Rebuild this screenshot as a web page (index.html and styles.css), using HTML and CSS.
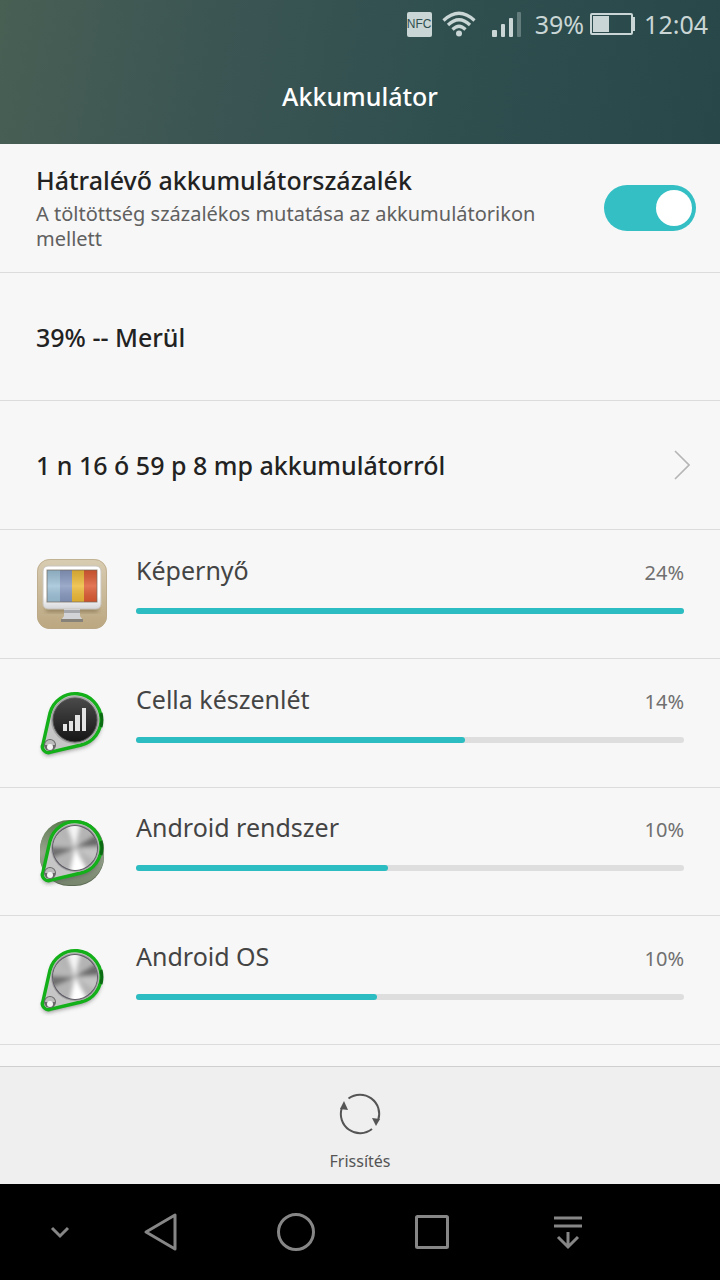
FILE: index.html
```
<!DOCTYPE html>
<html lang="hu">
<head>
	<meta charset="UTF-8">
	<meta name="viewport" content="width=device-width, initial-scale=1">
	<title>Akkumulátor</title>
	<link rel="stylesheet" href="styles.css">
</head>
<body>
	<!-- shared gradients and the knob drawing -->
	<svg class="defs" width="0" height="0" aria-hidden="true">
		<defs>
			<linearGradient id="tan" x1="0" y1="0" x2="0" y2="1">
				<stop offset="0" stop-color="#d8ccb2"/>
				<stop offset="1" stop-color="#bba780"/>
			</linearGradient>
			<linearGradient id="frame" x1="0" y1="0" x2="0" y2="1">
				<stop offset="0.7" stop-color="#fff"/>
				<stop offset="1" stop-color="#d4d5d8"/>
			</linearGradient>
			<linearGradient id="shine" x1="0" y1="0" x2="0" y2="1">
				<stop offset="0" stop-color="#333" stop-opacity="0.15"/>
				<stop offset="0.5" stop-color="#fff" stop-opacity="0.2"/>
				<stop offset="1" stop-color="#333" stop-opacity="0.1"/>
			</linearGradient>
			<linearGradient id="dark" x1="0" y1="0" x2="0" y2="1">
				<stop offset="0" stop-color="#4a4a4a"/>
				<stop offset="1" stop-color="#151515"/>
			</linearGradient>
			<linearGradient id="olive" x1="0" y1="0" x2="0" y2="1">
				<stop offset="0" stop-color="#5d7a50"/>
				<stop offset="0.5" stop-color="#98a48f"/>
				<stop offset="1" stop-color="#77866d"/>
			</linearGradient>
			<filter id="shadow" x="-30%" y="-30%" width="160%" height="160%">
				<feGaussianBlur stdDeviation="2"/>
			</filter>
			<filter id="soft" x="-20%" y="-20%" width="140%" height="140%">
				<feGaussianBlur stdDeviation="2"/>
			</filter>
			<clipPath id="disc"><circle cx="39" cy="33" r="22"/></clipPath>
			<g id="base">
				<path d="M14 26A26 26 0 1 1 45 58L15 65A6 6 0 0 1 7 57Z" transform="translate(0 3)" fill="#555" opacity="0.6" filter="url(#shadow)"/>
				<path d="M14 26A26 26 0 1 1 45 58L15 65A6 6 0 0 1 7 57Z" fill="#c6c6c6" stroke="#14b01a" stroke-width="3.4"/>
				<path d="M65 26A26 26 0 0 1 65 40" fill="none" stroke="#0b6b12" stroke-width="3"/>
				<circle cx="39" cy="33" r="24" fill="#a5a5a5"/>
				<circle cx="14" cy="58" r="6" fill="#686868"/>
				<path d="M9 58A5 5 0 0 1 19 58Z" fill="#bbb"/>
				<circle cx="14" cy="60" r="3" fill="#f4f4f4"/>
			</g>
			<g id="knob">
				<use href="#base"/>
				<circle cx="39" cy="33" r="23" fill="#625e69"/>
				<g clip-path="url(#disc)">
					<circle cx="39" cy="33" r="22" fill="#b4b4b4"/>
					<g filter="url(#soft)">
						<path d="M39 33L28 2H46Z" fill="#f4f4f4"/>
						<path d="M39 33L66 16V31Z" fill="#6a6a6a"/>
						<path d="M39 33L66 32V50Z" fill="#c4c4c4"/>
						<path d="M39 33L56 64H32Z" fill="#fff"/>
						<path d="M39 33L12 45V32Z" fill="#6f6f6f"/>
						<path d="M39 33L12 30L18 12Z" fill="#b8b8b8"/>
					</g>
				</g>
			</g>
		</defs>
	</svg>

	<header class="top">
		<div class="status">
			<span class="nfc">NFC</span>
			<svg class="wifi" width="34" height="26" viewBox="0 0 34 26" aria-hidden="true">
				<g fill="none" stroke="#c9d6d5" stroke-width="3.2">
					<path d="M1.500 9.500Q17 -5 32.500 9.500"/>
					<path d="M6 14Q17 3.500 28 14"/>
					<path d="M10.500 18.500Q17 12 23.500 18.500"/>
				</g>
				<circle cx="17" cy="22.500" r="3" fill="#c9d6d5"/>
			</svg>
			<svg class="signal" width="29" height="25" viewBox="0 0 29 25" aria-hidden="true">
				<g fill="#c9d6d5">
					<rect x="0" y="18" width="5" height="7" rx="1"/>
					<rect x="9" y="12" width="4" height="13" rx="1"/>
					<rect x="17" y="6" width="4" height="19" rx="1"/>
					<rect x="25" y="0" width="4" height="25" rx="1" opacity="0.35"/>
				</g>
			</svg>
			<span class="level">39%</span>
			<svg class="battery" width="46" height="22" viewBox="0 0 46 22" aria-hidden="true">
				<rect x="1" y="1" width="41" height="20" rx="1" fill="none" stroke="#c9d6d5" stroke-width="2"/>
				<rect x="3" y="3" width="16" height="16" fill="#c9d6d5"/>
				<path d="M42 5H44V17H42" fill="none" stroke="#c9d6d5" stroke-width="2"/>
			</svg>
			<time>12:04</time>
		</div>
		<h1>Akkumulátor</h1>
	</header>

	<main class="list">
		<div class="row">
			<label class="label" for="percent">
				<span class="title">Hátralévő akkumulátorszázalék</span>
				<span class="note">A töltöttség százalékos mutatása az akkumulátorikon mellett</span>
			</label>
			<input class="switch" type="checkbox" id="percent" checked>
		</div>
		<div class="row">
			<p class="title">39% -- Merül</p>
		</div>
		<a class="row link" href="#history">
			<span class="title">1 n 16 ó 59 p 8 mp akkumulátorról</span>
			<svg class="arrow" width="16" height="30" viewBox="0 0 16 30" aria-hidden="true">
				<path d="M1 1L15 15L1 29" fill="none" stroke="#b5b5b5" stroke-width="1.6"/>
			</svg>
		</a>
		<div class="row app">
			<svg class="icon" width="72" height="72" viewBox="0 0 72 72" aria-hidden="true">
				<rect x="1" y="1" width="70" height="70" rx="13" fill="url(#tan)"/>
				<rect x="1.500" y="1.500" width="69" height="69" rx="12" fill="none" stroke="#b9a788" opacity="0.7"/>
				<path d="M10 49H62V54H10Z" fill="#65512e" opacity="0.5" filter="url(#shadow)"/>
				<rect x="7" y="8" width="58" height="43" rx="5" fill="url(#frame)" stroke="#c9c5bd"/>
				<rect x="11" y="12" width="13" height="32" fill="#9bbfd5"/>
				<rect x="24" y="12" width="12" height="32" fill="#8496bd"/>
				<rect x="36" y="12" width="12" height="32" fill="#edb831"/>
				<rect x="48" y="12" width="13" height="32" fill="#dc562d"/>
				<rect x="11" y="12" width="50" height="32" fill="url(#shine)"/>
				<rect x="11" y="12" width="50" height="32" fill="none" stroke="#74675c" opacity="0.7"/>
				<path d="M28 51H44V58L47 62H25L28 58Z" fill="#d2d3d6"/>
				<path d="M28 52H44V55H28Z" fill="#a5a6aa"/>
				<path d="M25 61H47V64H25Z" fill="#868179"/>
			</svg>
			<div class="usage">
				<div class="line"><span class="name">Képernyő</span><span class="value">24%</span></div>
				<div class="bar"><div class="fill" style="width: 100%"></div></div>
			</div>
		</div>
		<div class="row app">
			<svg class="icon" width="72" height="72" viewBox="0 0 72 72" aria-hidden="true">
				<use href="#base"/>
				<circle cx="39" cy="33" r="22" fill="url(#dark)" stroke="#515151"/>
				<g fill="#e4e4e4">
					<rect x="27" y="37" width="4" height="7"/>
					<rect x="33" y="34" width="4" height="10"/>
					<rect x="39" y="28" width="5" height="16"/>
					<rect x="46" y="21" width="4" height="23"/>
				</g>
			</svg>
			<div class="usage">
				<div class="line"><span class="name">Cella készenlét</span><span class="value">14%</span></div>
				<div class="bar"><div class="fill" style="width: 60%"></div></div>
			</div>
		</div>
		<div class="row app">
			<svg class="icon" width="72" height="72" viewBox="0 0 72 72" aria-hidden="true">
				<rect x="4" y="6" width="64" height="65" rx="29" fill="#5c6b53"/>
				<rect x="4" y="5" width="64" height="65" rx="29" fill="url(#olive)"/>
				<use href="#knob"/>
			</svg>
			<div class="usage">
				<div class="line"><span class="name">Android rendszer</span><span class="value">10%</span></div>
				<div class="bar"><div class="fill" style="width: 46%"></div></div>
			</div>
		</div>
		<div class="row app">
			<svg class="icon" width="72" height="72" viewBox="0 0 72 72" aria-hidden="true">
				<use href="#knob"/>
			</svg>
			<div class="usage">
				<div class="line"><span class="name">Android OS</span><span class="value">10%</span></div>
				<div class="bar"><div class="fill" style="width: 44%"></div></div>
			</div>
		</div>
	</main>

	<footer class="toolbar">
		<button class="refresh" type="button">
			<svg width="44" height="44" viewBox="0 0 44 44" aria-hidden="true">
				<g fill="none" stroke="#555" stroke-width="2">
					<path d="M10.500 6.500A19.200 19.200 0 0 1 40.200 28"/>
					<path d="M34 37A19.200 19.200 0 0 1 3.800 16"/>
				</g>
				<path d="M6 9L10 18L2 17Z" fill="#555"/>
				<path d="M38 34L34 26L42 27Z" fill="#555"/>
			</svg>
			<span>Frissítés</span>
		</button>
	</footer>

	<nav class="nav">
		<button class="hide" type="button" aria-label="Elrejtés">
			<svg width="40" height="40" viewBox="0 0 40 40"><path d="M12 16L20 24L28 16"/></svg>
		</button>
		<button type="button" aria-label="Vissza">
			<svg width="40" height="40" viewBox="0 0 40 40"><path d="M35 3V37L6 20Z" stroke-linejoin="round"/></svg>
		</button>
		<button type="button" aria-label="Kezdőlap">
			<svg width="40" height="40" viewBox="0 0 40 40"><circle cx="20" cy="20" r="17.500"/></svg>
		</button>
		<button type="button" aria-label="Legutóbbiak">
			<svg width="40" height="40" viewBox="0 0 40 40"><rect x="4.500" y="4.500" width="31" height="31" rx="1"/></svg>
		</button>
		<button type="button" aria-label="Értesítések">
			<svg width="40" height="40" viewBox="0 0 40 40"><path d="M6 6H34M6 14H34M20 20V34M10 25L20 35L30 25"/></svg>
		</button>
	</nav>
</body>
</html>
```

FILE: styles.css
```
* {
	box-sizing: border-box;
	margin: 0;
	padding: 0;
}
body {
	display: flex;
	flex-direction: column;
	min-height: 100vh;
	font-family: "Noto Sans", sans-serif;
	color: #222;
	background-color: #f7f7f7;
}
button {
	border: 0;
	background: none;
	font-family: inherit;
	cursor: pointer;
}
svg {
	display: block;
	flex: none;
}
.defs {
	position: absolute;
}

/* header */
.top {
	background: linear-gradient(100deg, #485f54 0%, #3b5553 30%, #2f4f4f 62%, #284749 100%);
}
.status {
	display: flex;
	align-items: center;
	justify-content: flex-end;
	height: 48px;
	padding-right: 12px;
	font-size: 25px;
	color: #c9d6d5;
}
.nfc {
	width: 25px;
	border-radius: 2px;
	line-height: 25px;
	font-family: "Liberation Sans Narrow", "Liberation Sans", sans-serif;
	font-size: 12px;
	text-align: center;
	color: #2f4e4f;
	background-color: #c9d6d5;
}
.wifi {
	margin-left: 10px;
}
.signal {
	margin: 0 14px 0 16px;
}
.battery {
	margin: 0 8px 0 6px;
}
h1 {
	height: 96px;
	line-height: 96px;
	font-size: 25px;
	font-weight: 500;
	text-align: center;
	color: #fff;
}

/* list */
.list {
	flex: 1;
	display: grid;
	grid-auto-rows: 1fr;
	padding-bottom: 21px;
}
.row {
	display: flex;
	align-items: center;
	justify-content: space-between;
	min-height: 128px;
	padding: 0 24px 0 36px;
	border-bottom: 1px solid #dcdcdc;
	color: inherit;
	text-decoration: none;
}
.label {
	display: flex;
	flex-direction: column;
	gap: 6px;
	max-width: 520px;
}
.title {
	line-height: 30px;
	font-size: 25px;
	font-weight: 500;
}
.note {
	line-height: 25px;
	font-size: 20px;
	color: #606060;
}
.switch {
	flex: none;
	appearance: none;
	width: 92px;
	height: 46px;
	padding: 5px 4px;
	border-radius: 23px;
	background-color: #bbb;
	cursor: pointer;
}
.switch::before {
	content: "";
	display: block;
	width: 36px;
	height: 36px;
	border-radius: 50%;
	background-color: #fff;
}
.switch:checked {
	background-color: #33bfc4;
}
.switch:checked::before {
	margin-left: auto;
}
.link {
	padding-right: 30px;
}
.app {
	gap: 28px;
	padding-right: 36px;
}
.usage {
	flex: 1;
	padding-bottom: 20px;
}
.line {
	display: flex;
	align-items: baseline;
	justify-content: space-between;
	height: 36px;
	margin-bottom: 18px;
	line-height: 32px;
}
.name {
	font-size: 25px;
	color: #444;
}
.value {
	font-size: 20px;
	color: #707070;
}
.bar {
	height: 6px;
	border-radius: 3px;
	background-color: #dedede;
}
.fill {
	height: 6px;
	border-radius: 3px;
	background-color: #2bbdc1;
}

/* bottom */
.toolbar {
	display: flex;
	justify-content: center;
	height: 118px;
	border-top: 1px solid #cfcfcf;
	background-color: #efefef;
}
.refresh {
	display: flex;
	flex-direction: column;
	align-items: center;
	gap: 14px;
	padding: 25px 20px 0;
	line-height: 22px;
	font-size: 16px;
	color: #555;
}
.nav {
	display: flex;
	align-items: center;
	gap: 96px;
	height: 96px;
	padding-left: 40px;
	background-color: #000;
}
.nav .hide {
	margin-right: -36px;
}
.nav svg {
	fill: none;
	stroke: #868686;
	stroke-width: 3;
}
```
